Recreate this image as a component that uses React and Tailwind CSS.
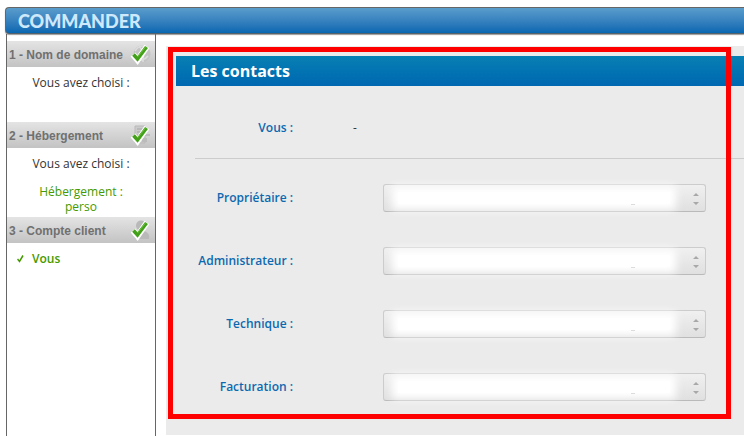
import React from "react";

const contacts = [
  { id: "owner", label: "Propriétaire :" },
  { id: "admin", label: "Administrateur :" },
  { id: "tech", label: "Technique :" },
  { id: "billing", label: "Facturation :" },
];

function StepIcon({ kind }) {
  return (
    <svg className="shrink-0" width="22" height="22" viewBox="0 0 22 22" aria-hidden="true">
      {kind === "domain" && (
        <g>
          <circle cx="12" cy="11" r="8.5" fill="#c4c4c4" />
          <path d="M5 8c3-5 8-6 11-4M6 16c4 2 9 1 12-3M9 3c4 4 5 10 4 16" fill="none" stroke="#dedede" strokeWidth="1.5" />
        </g>
      )}
      {kind === "hosting" && (
        <g>
          <path d="M5 2h10v17H5z" fill="#cbcbcb" stroke="#b9b9b9" />
          <path d="M7 5h6M7 8h6M7 11h6M14 11h6" stroke="#a5a5a5" strokeWidth="1.2" />
          <path d="M12 14h5v4h-5z" fill="#bbb" />
        </g>
      )}
      {kind === "client" && (
        <g fill="#b9b9b9">
          <circle cx="11" cy="6.5" r="5" />
          <path d="M5 20c-1-5 2-8 7-8s8 3 7 8z" />
        </g>
      )}
      <path d="M3 11.5l4.500 5.500L17 3.500" fill="none" stroke="#fff" strokeWidth="6" />
      <path d="M3.500 11.5l4 4.500L16.500 4" fill="none" stroke="#42a118" strokeWidth="3.6" />
      <path d="M7.5 14L15.8 3.500" fill="none" stroke="#72c044" strokeWidth="1" />
    </svg>
  );
}

function Step({ title, kind, children }) {
  return (
    <section>
      <div className="flex h-[26px] items-center justify-between bg-linear-to-b from-[#e4e4e4] to-[#c3c3c3] pr-[3px] pl-[2px]">
        <h2 className="pt-px font-['Liberation_Sans',Arial,sans-serif] text-[12px] leading-4 font-bold whitespace-nowrap text-[#707070]">
          {title}
        </h2>
        <StepIcon kind={kind} />
      </div>
      {children}
    </section>
  );
}

function ContactSelect({ id }) {
  return (
    <div className="relative mr-[38px] ml-[30px] h-[28px] flex-1">
      <select
        id={id}
        className="block h-full w-full appearance-none rounded-[3px] border border-[#cccccc] border-b-[#bababa] bg-linear-to-b from-[#f0f0f0] to-[#e0e0e0]"
      />
      <span className="pointer-events-none absolute inset-y-[8px] right-[36px] left-[15px] bg-white shadow-[0_0_8px_6px_#ffffff]" />
      <span className="pointer-events-none absolute right-[71px] bottom-[7px] h-px w-[4px] bg-[#dcdcdc]" />
      <svg className="pointer-events-none absolute top-[9px] right-[7px]" width="6" height="12" viewBox="0 0 6 12" aria-hidden="true">
        <path d="M0 3L3 0l3 3zM0 9h6l-3 3z" fill="#a8a8a8" />
      </svg>
    </div>
  );
}

export default function App() {
  return (
    <div className="min-h-screen bg-white pt-[7px] pl-[5px] font-['Open_Sans','Noto_Sans',sans-serif] text-[12px] leading-[14px] text-[#333333]">
      <header className="flex h-[27px] items-center rounded-l-[4px] border-y border-l border-[#666666] border-b-[#55626c] bg-linear-to-b from-[#5a9dcc] to-[#0567b1] pl-[12px] shadow-[0_1px_1px_#999999]">
        <h1 className="font-['Lato',sans-serif] text-[18px] leading-6 font-black text-[#cfe9fc]">COMMANDER</h1>
      </header>
      <div className="flex min-h-[402px] items-stretch pl-px">
        <aside className="w-[150px] shrink-0 border-x border-[#666666] pt-[7px]">
          <Step title="1 - Nom de domaine" kind="domain">
            <p className="h-[55px] pt-[9px] text-center">Vous avez choisi :</p>
          </Step>
          <Step title="2 - Hébergement" kind="hosting">
            <div className="h-[69px] pt-[9px] text-center">
              <p>Vous avez choisi :</p>
              <p className="mt-[13px] leading-[15px] text-[#459a00]">
                Hébergement :<br />
                perso
              </p>
            </div>
          </Step>
          <Step title="3 - Compte client" kind="client">
            <p className="flex items-center pt-[9px] pl-[10px] font-semibold text-[#459a00]">
              <svg className="mr-[8px]" width="7" height="8" viewBox="0 0 7 8" aria-hidden="true">
                <path d="M.5 4l2 2.5L6 .5" fill="none" stroke="#459a00" strokeWidth="1.5" />
              </svg>
              Vous
            </p>
          </Step>
        </aside>
        <main className="relative mt-[12px] mb-px ml-[10px] flex-1 bg-[#ebebeb] pt-[10px]">
          <h2 className="ml-[10px] flex h-[30px] items-center bg-linear-to-b from-[#0980b3] to-[#0067b1] pl-[15px] text-[16px] leading-5 font-bold text-white">
            Les contacts
          </h2>
          <form>
            <div className="flex h-[72px] items-center pt-[12px]">
              <span className="w-[127px] text-right font-semibold text-[#0b69b0]">Vous :</span>
              <span className="ml-[60px]">-</span>
            </div>
            <hr className="ml-[29px] border-[#cccccc]" />
            <div className="flex flex-col gap-[35px] pt-[25px]">
              {contacts.map(({ id, label }) => (
                <div key={id} className="flex items-center">
                  <label htmlFor={id} className="mr-[60px] w-[127px] text-right font-semibold whitespace-nowrap text-[#0b69b0]">
                    {label}
                  </label>
                  <ContactSelect id={id} />
                </div>
              ))}
            </div>
          </form>
          <div className="pointer-events-none absolute top-px right-[13px] bottom-[16px] left-[2px] border-[5px] border-[#ff0000]" />
        </main>
      </div>
    </div>
  );
}
